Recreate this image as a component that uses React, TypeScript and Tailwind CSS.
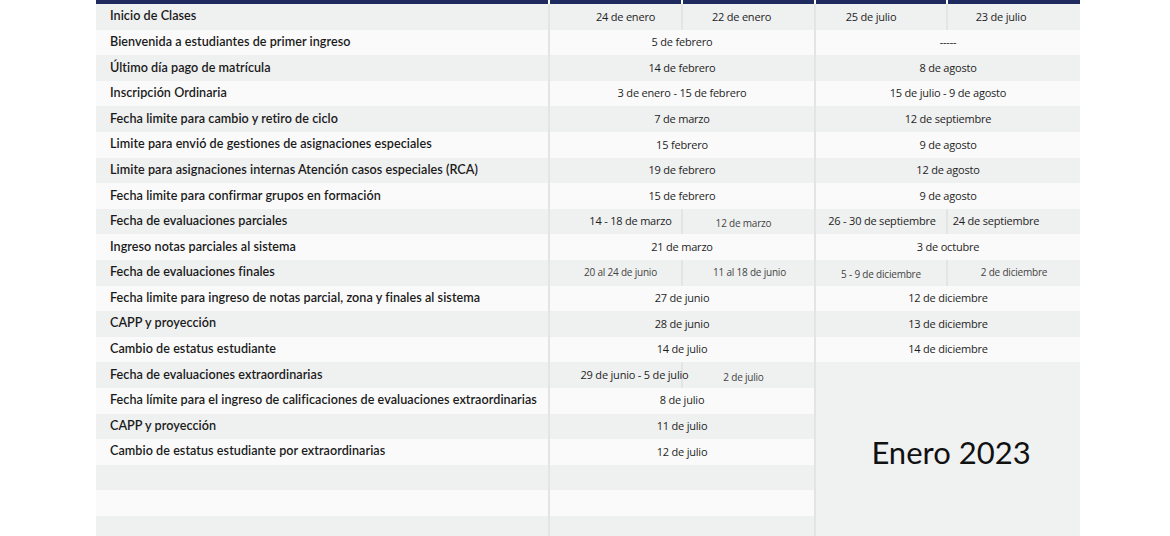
import React from 'react';

type Cell = { text: string; cls?: string };
type Part = Cell | [Cell, Cell] | null;
type Row = { label: string; s1: Part; s2?: Part };

const rows: Row[] = [
  {
    label: 'Inicio de Clases',
    s1: [{ text: '24 de enero', cls: 'translate-x-[10px]' }, { text: '22 de enero', cls: '-translate-x-[7px]' }],
    s2: [{ text: '25 de julio', cls: '-translate-x-[10px]' }, { text: '23 de julio', cls: '-translate-x-[13px]' }],
  },
  { label: 'Bienvenida a estudiantes de primer ingreso', s1: { text: '5 de febrero' }, s2: { text: '-----' } },
  { label: 'Último día pago de matrícula', s1: { text: '14 de febrero' }, s2: { text: '8 de agosto' } },
  { label: 'Inscripción Ordinaria', s1: { text: '3 de enero - 15 de febrero' }, s2: { text: '15 de julio - 9 de agosto' } },
  { label: 'Fecha limite para cambio y retiro de ciclo', s1: { text: '7 de marzo' }, s2: { text: '12 de septiembre' } },
  { label: 'Limite para envió de gestiones de asignaciones especiales', s1: { text: '15 febrero' }, s2: { text: '9 de agosto' } },
  { label: 'Limite para asignaciones internas Atención casos especiales (RCA)', s1: { text: '19 de febrero' }, s2: { text: '12 de agosto' } },
  { label: 'Fecha limite para confirmar grupos en formación', s1: { text: '15 de febrero' }, s2: { text: '9 de agosto' } },
  {
    label: 'Fecha de evaluaciones parciales',
    s1: [{ text: '14 - 18 de marzo', cls: 'translate-x-[15px]' }, { text: '12 de marzo', cls: 'text-[10px] text-[#444] translate-y-[2px] -translate-x-[5px]' }],
    s2: [{ text: '26 - 30 de septiembre', cls: 'translate-x-[1px]' }, { text: '24 de septiembre', cls: '-translate-x-[18px]' }],
  },
  { label: 'Ingreso notas parciales al sistema', s1: { text: '21 de marzo' }, s2: { text: '3 de octubre' } },
  {
    label: 'Fecha de evaluaciones finales',
    s1: [{ text: '20 al 24 de junio', cls: 'text-[10px] text-[#444] translate-x-[5px]' }, { text: '11 al 18 de junio', cls: 'text-[10px] text-[#444] translate-x-[1px]' }],
    s2: [{ text: '5 - 9 de diciembre', cls: 'text-[10px] text-[#444] translate-y-[2px]' }, { text: '2 de diciembre', cls: 'text-[10px] text-[#444]' }],
  },
  { label: 'Fecha limite para ingreso de notas parcial, zona y finales al sistema', s1: { text: '27 de junio' }, s2: { text: '12 de diciembre' } },
  { label: 'CAPP y proyección', s1: { text: '28 de junio' }, s2: { text: '13 de diciembre' } },
  { label: 'Cambio de estatus estudiante', s1: { text: '14 de julio' }, s2: { text: '14 de diciembre' } },
  {
    label: 'Fecha de evaluaciones extraordinarias',
    s1: [{ text: '29 de junio - 5 de julio', cls: 'translate-x-[19px]' }, { text: '2 de julio', cls: 'text-[10px] text-[#444] translate-y-[2px] -translate-x-[5px]' }],
  },
  { label: 'Fecha límite para el ingreso de calificaciones de evaluaciones extraordinarias', s1: { text: '8 de julio' } },
  { label: 'CAPP y proyección', s1: { text: '11 de julio' } },
  { label: 'Cambio de estatus estudiante por extraordinarias', s1: { text: '12 de julio' } },
  { label: '', s1: null },
  { label: '', s1: null },
  { label: '', s1: null },
];

const dateFont = "font-['Open_Sans','Noto_Sans',sans-serif]";

function DateCell({ cell, bg, span }: { cell: Cell | null; bg: string; span?: boolean }) {
  return (
    <div
      className={`${bg} ${span ? 'col-span-2' : ''} border-l-2 border-[#e3e4e4] flex items-center justify-center ${dateFont} text-[11px] text-[#1e1e1e] whitespace-nowrap tracking-[-0.2px]`}
    >
      {cell && <span className={cell.cls ?? ''}>{cell.text}</span>}
    </div>
  );
}

function renderPart(part: Part, bg: string, key: string) {
  if (Array.isArray(part)) {
    return [
      <DateCell key={key + 'a'} cell={part[0]} bg={bg} />,
      <DateCell key={key + 'b'} cell={part[1]} bg={bg} />,
    ];
  }
  return <DateCell key={key} cell={part} bg={bg} span />;
}

export default function App() {
  return (
    <div className="w-[1170px] h-[536px] overflow-hidden bg-white">
      <div className="ml-[96px] w-[984px]">
        {/* navy header strip */}
        <div className="grid grid-cols-[452px_133px_133px_132px_134px] h-[4px]">
          <div className="bg-[#1f2a5e]" />
          <div className="bg-[#1f2a5e] border-l-2 border-white" />
          <div className="bg-[#1f2a5e] border-l-2 border-white" />
          <div className="bg-[#1f2a5e] border-l-2 border-white" />
          <div className="bg-[#1f2a5e] border-l-2 border-white" />
        </div>
        <div className="grid grid-cols-[452px_133px_133px_132px_134px] auto-rows-[25.6px]">
          {rows.map((r, i) => {
            const bg = i % 2 === 0 ? 'bg-[#eff0f0]' : 'bg-[#fafafa]';
            return (
              <React.Fragment key={i}>
                <div
                  className={`${bg} flex items-center pl-[14px] font-['Lato','Noto_Sans',sans-serif] font-semibold text-[12.6px] tracking-[0.05px] text-[#1a1a1a] whitespace-nowrap`}
                >
                  {r.label}
                </div>
                {renderPart(r.s1, bg, 's1')}
                {r.s2 !== undefined && renderPart(r.s2, bg, 's2')}
              </React.Fragment>
            );
          })}
          <div className="col-start-4 col-span-2 row-start-15 row-span-7 bg-[#f0f1f1] border-l-2 border-[#e3e4e4] flex items-center justify-center font-['Lato','Noto_Sans',sans-serif] text-[31px] text-[#111] pl-[6px]">
            Enero 2023
          </div>
        </div>
      </div>
    </div>
  );
}
